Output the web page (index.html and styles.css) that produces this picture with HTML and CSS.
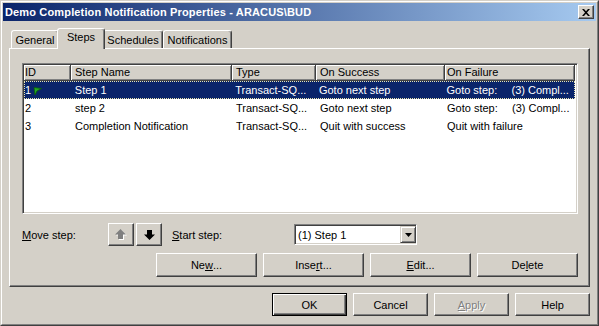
FILE: index.html
```html
<!DOCTYPE html>
<html lang="en">
<head>
    <meta charset="UTF-8">
    <meta name="viewport" content="width=device-width, initial-scale=1.0">
    <title>Demo Completion Notification Properties</title>
    <link rel="stylesheet" href="styles.css">
</head>
<body>
    <div class="window">
        <div class="frame">
            <div class="titlebar">
                <span class="title">Demo Completion Notification Properties - ARACUS\BUD</span>
                <span class="close-btn">
                    <svg width="8" height="7" viewBox="0 0 8 7"><path d="M0 0h2l2 2.2L6 0h2L5 3.5 8 7H6L4 4.8 2 7H0l3-3.5z" fill="#000"/></svg>
                </span>
            </div>
            <div class="content">
                <div class="tabs">
                    <div class="tab tab-general">General</div>
                    <div class="tab tab-steps active">Steps</div>
                    <div class="tab tab-schedules">Schedules</div>
                    <div class="tab tab-notifications">Notifications</div>
                </div>
                <div class="panel">
                    <div class="list">
                        <div class="list-head">
                            <div class="hcell col-id">ID</div>
                            <div class="hcell col-name">Step Name</div>
                            <div class="hcell col-type">Type</div>
                            <div class="hcell col-success">On Success</div>
                            <div class="hcell col-failure">On Failure</div>
                        </div>
                        <div class="list-row selected">
                            <div class="cell col-id">1<svg class="flag" width="9" height="8" viewBox="0 0 9 8"><path d="M1 0.5 L8.5 1.5 L4 4 L2 8 Z" fill="#22a822" stroke="#0b5d0b" stroke-width="0.8"/></svg></div>
                            <div class="cell col-name">Step 1</div>
                            <div class="cell col-type">Transact-SQ...</div>
                            <div class="cell col-success">Goto next step</div>
                            <div class="cell col-failure"><span class="goto">Goto step:</span>(3) Compl...</div>
                        </div>
                        <div class="list-row">
                            <div class="cell col-id">2</div>
                            <div class="cell col-name">step 2</div>
                            <div class="cell col-type">Transact-SQ...</div>
                            <div class="cell col-success">Goto next step</div>
                            <div class="cell col-failure"><span class="goto">Goto step:</span>(3) Compl...</div>
                        </div>
                        <div class="list-row">
                            <div class="cell col-id">3</div>
                            <div class="cell col-name">Completion Notification</div>
                            <div class="cell col-type">Transact-SQ...</div>
                            <div class="cell col-success">Quit with success</div>
                            <div class="cell col-failure">Quit with failure</div>
                        </div>
                    </div>

                    <div class="move-row">
                        <span class="move-label"><u>M</u>ove step:</span>
                        <span class="btn arrow-btn">
                            <svg width="12" height="11" viewBox="0 0 12 11"><path d="M6.5 1L12 6.5H9V11H4V6.5H1z" fill="#fff"/><path d="M5.5 0L11 5.5H8V10H3V5.5H0z" fill="#808080"/></svg>
                        </span>
                        <span class="btn arrow-btn">
                            <svg width="11" height="10" viewBox="0 0 11 10"><path d="M3 0H8V4.5H11L5.5 10L0 4.5H3z" fill="#000"/></svg>
                        </span>
                        <span class="start-label"><u>S</u>tart step:</span>
                        <div class="combo">
                            <span class="combo-text">(1) Step 1</span>
                            <span class="combo-drop">
                                <svg width="7" height="4" viewBox="0 0 7 4"><path d="M0 0H7L3.5 4z" fill="#000"/></svg>
                            </span>
                        </div>
                    </div>

                    <div class="action-row">
                        <button class="btn action-btn">Ne<u>w</u>...</button>
                        <button class="btn action-btn">Inse<u>r</u>t...</button>
                        <button class="btn action-btn"><u>E</u>dit...</button>
                        <button class="btn action-btn">De<u>l</u>ete</button>
                    </div>
                </div>

                <div class="dialog-buttons">
                    <button class="btn dialog-btn default">OK</button>
                    <button class="btn dialog-btn">Cancel</button>
                    <button class="btn dialog-btn disabled"><u>A</u>pply</button>
                    <button class="btn dialog-btn">Help</button>
                </div>
            </div>
        </div>
    </div>
</body>
</html>
```

FILE: styles.css
```css
body {
    margin: 0;
    background: #d4d0c8;
    font-family: 'Liberation Sans', Arial, sans-serif;
    font-size: 11px;
    color: #000;
}
.window {
    width: 599px;
    height: 326px;
    box-sizing: border-box;
    border: 1px solid;
    border-color: #d4d0c8 #404040 #404040 #d4d0c8;
}
.frame {
    height: 100%;
    box-sizing: border-box;
    border: 1px solid;
    border-color: #fff #808080 #808080 #fff;
    padding: 1px;
}
.titlebar {
    height: 18px;
    display: flex;
    align-items: center;
    justify-content: space-between;
    background: linear-gradient(to right, #0a246a, #a6caf0);
    padding-left: 2px;
}
.title {
    color: #fff;
    font-weight: bold;
    line-height: 18px;
    letter-spacing: 0.15px;
}
.close-btn {
    width: 16px;
    height: 14px;
    box-sizing: border-box;
    margin-right: 2px;
    background: #d4d0c8;
    border: 1px solid;
    border-color: #fff #404040 #404040 #fff;
    box-shadow: inset -1px -1px #808080;
    display: flex;
    align-items: center;
    justify-content: center;
}
.content {
    padding: 0 6px;
}
.tabs {
    height: 20px;
    margin-top: 7px;
    padding-left: 2px;
    display: flex;
    align-items: flex-end;
}
.tab {
    height: 18px;
    box-sizing: border-box;
    border: 1px solid;
    border-bottom: none;
    border-color: #fff #404040 transparent #fff;
    border-radius: 3px 3px 0 0;
    box-shadow: inset -1px 0 #808080;
    display: flex;
    justify-content: center;
    padding-top: 3px;
    line-height: 13px;
}
.tab-general { width: 48px; }
.tab-steps { width: 44px; }
.tab-schedules { width: 60px; }
.tab-notifications { width: 69px; }
.tab.active {
    width: 48px;
    height: 21px;
    margin: 0 -2px -1px;
    padding-top: 2px;
    position: relative;
    z-index: 1;
    background: #d4d0c8;
}
.panel {
    border: 1px solid;
    border-color: #fff #404040 #404040 #fff;
    box-shadow: inset -1px -1px #808080;
    padding: 14px 11px 9px 12px;
}
.list {
    height: 151px;
    box-sizing: border-box;
    border: 1px solid;
    border-color: #808080 #fff #fff #808080;
    box-shadow: inset 1px 1px #404040, inset -1px -1px #d4d0c8;
    padding: 1px;
    background: #fff;
}
.list-head, .list-row {
    display: flex;
}
.list-head {
    height: 16px;
}
.hcell {
    box-sizing: border-box;
    background: #d4d0c8;
    border-right: 1px solid #404040;
    border-bottom: 1px solid #404040;
    box-shadow: inset 1px 1px #fff, inset -1px -1px #808080;
    padding: 0 4px;
    line-height: 15px;
    white-space: nowrap;
    overflow: hidden;
}
.list-row {
    height: 18px;
}
.cell {
    box-sizing: border-box;
    padding: 0 4px;
    line-height: 18px;
    white-space: nowrap;
    overflow: hidden;
}
.col-id { width: 47px; padding-left: 1px; }
.col-name { width: 161px; }
.col-type { width: 84px; }
.col-success { width: 129px; }
.col-failure { width: 130px; padding-left: 2px; }
.list-row.selected {
    width: 551px;
    box-sizing: border-box;
    background: #0a246a;
    color: #fff;
    border: 1px dotted #e8e4b0;
}
.list-row.selected .cell {
    line-height: 16px;
}
.list-row.selected .col-id {
    padding-left: 0;
}
.list-row.selected .col-name,
.list-row.selected .col-type,
.list-row.selected .col-success {
    padding-left: 3px;
}
.flag {
    margin-left: 2px;
    vertical-align: -1px;
}
.goto {
    display: inline-block;
    width: 65px;
}
.move-row {
    margin-top: 9px;
    height: 23px;
    display: flex;
    align-items: center;
}
.move-label {
    width: 86px;
}
.start-label {
    width: 122px;
    margin-left: 8px;
}
.btn {
    box-sizing: border-box;
    background: #d4d0c8;
    border: 1px solid;
    border-color: #fff #404040 #404040 #fff;
    box-shadow: inset -1px -1px #808080;
    font-family: inherit;
    font-size: 11px;
    color: #000;
    padding: 0;
    display: flex;
    align-items: center;
    justify-content: center;
}
.arrow-btn {
    width: 26px;
    height: 23px;
    margin-right: 2px;
}
.combo {
    width: 123px;
    height: 21px;
    box-sizing: border-box;
    border: 1px solid;
    border-color: #808080 #fff #fff #808080;
    box-shadow: inset 1px 1px #404040, inset -1px -1px #d4d0c8;
    background: #fff;
    padding: 2px;
    display: flex;
    align-items: center;
    justify-content: space-between;
}
.combo-text {
    padding-left: 1px;
}
.combo-drop {
    width: 16px;
    height: 17px;
    box-sizing: border-box;
    background: #d4d0c8;
    border: 1px solid;
    border-color: #d4d0c8 #404040 #404040 #d4d0c8;
    box-shadow: inset 1px 1px #fff, inset -1px -1px #808080;
    display: flex;
    align-items: center;
    justify-content: center;
    margin-right: -2px;
}
.action-row {
    margin-top: 7px;
    display: flex;
    justify-content: flex-end;
    gap: 6px;
}
.action-btn {
    width: 101px;
    height: 24px;
}
.dialog-buttons {
    margin-top: 6px;
    display: flex;
    justify-content: flex-end;
    gap: 6px;
}
.dialog-btn {
    width: 75px;
    height: 23px;
}
.dialog-btn.default {
    border: 1px solid #000;
    box-shadow: inset 1px 1px #fff, inset -1px -1px #404040, inset -2px -2px #808080;
}
.dialog-btn.disabled {
    color: #808080;
    text-shadow: 1px 1px 0 #fff;
}
```
